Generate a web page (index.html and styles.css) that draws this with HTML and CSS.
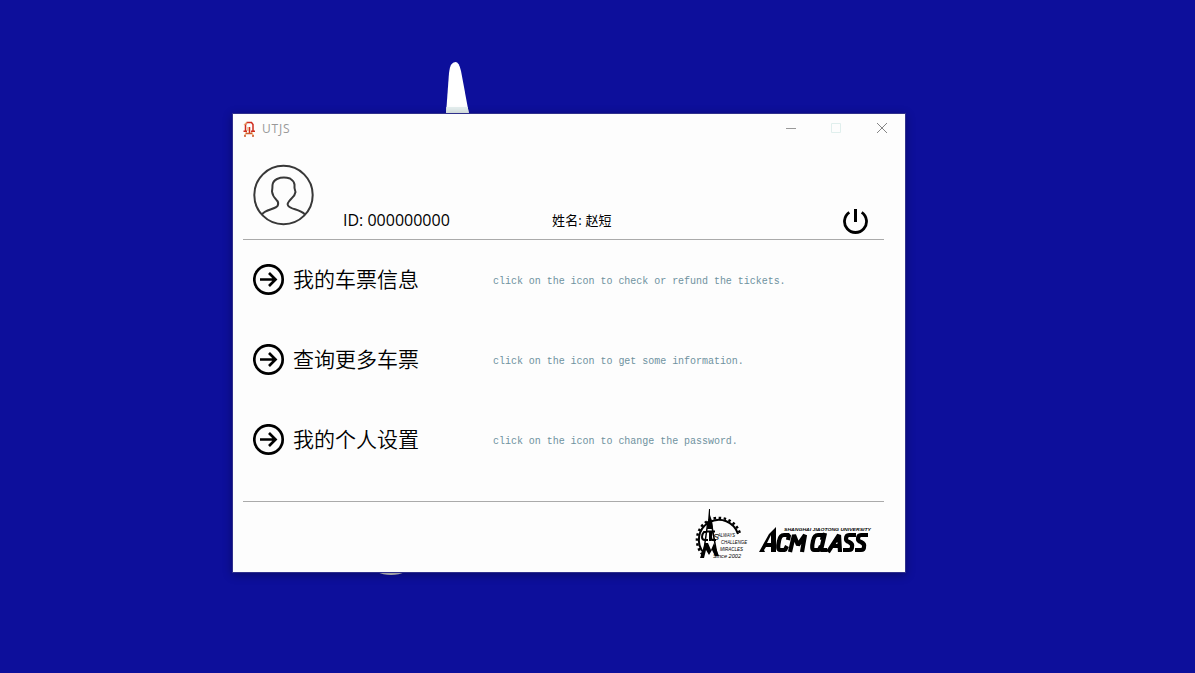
FILE: index.html
```
<!DOCTYPE html>
<html lang="zh-CN">
<head>
<meta charset="utf-8">
<title>UTJS</title>
<link rel="stylesheet" href="styles.css">
</head>
<body>
<svg class="symbols" aria-hidden="true">
  <symbol id="arrow" viewBox="0 0 32 32">
    <circle cx="15.500" cy="15.500" r="14.200" fill="none" stroke="#000" stroke-width="2.700"/>
    <path d="M7 15.500H23M16 9l6.500 6.500l-6.500 6.500" fill="none" stroke="#000" stroke-width="2.700"/>
  </symbol>
</svg>
<main class="desktop">
  <svg class="wallpaper-tower" viewBox="0 0 24 52"><path d="M1 52L4 11Q5 0 10.500 0Q14 0 16 9L24 52Z" fill="#fff"/><path d="M1.300 45H22.700L24 52H1Z" fill="#e6f0f0"/></svg>
  <svg class="wallpaper-base" viewBox="0 0 28 4"><path d="M0 0H28Q22 3 14 3Q6 3 0 0Z" fill="#c9c9c9"/></svg>
  <section class="window">
    <header class="titlebar">
      <svg class="app-icon" viewBox="0 0 12 16"><path d="M2.500 10V3.500L4 1.500H8.500L10 3.500V10M.5 10.200H4M8 10.200h4M6.500 6v6" fill="none" stroke="#cf2b1c" stroke-width="1.500"/><path d="M1 4L4 1.500M5 6v4M3.500 11L1.500 15M8.500 11l2 4" fill="none" stroke="#ecaa73" stroke-width="1.300"/><path d="M3 12.500h6M1 15h2M9 15h2" stroke="#cf5b2c" stroke-width="1.400"/></svg>
      <span class="title">UTJS</span>
      <div class="controls">
        <svg viewBox="0 0 11 11"><path d="M1 5.500h10" stroke="#999"/></svg>
        <svg viewBox="0 0 11 11"><path d="M.5.5h9v9h-9z" fill="none" stroke="#e0efed"/></svg>
        <svg viewBox="0 0 11 11"><path d="M0 0l10 10M10 0l-10 10" stroke="#858585"/></svg>
      </div>
    </header>
    <div class="profile">
      <svg class="avatar" viewBox="0 0 62 62"><g fill="none" stroke="#383838" stroke-width="2"><circle cx="31.500" cy="31" r="29.200"/><path d="M10 50.500C13 45 24 45.500 25.800 41.500Q27 38 24.500 36Q20.500 32 20 27.500Q20.500 24 20.500 21Q21 17 25 15Q31 12.500 38 14.500Q42 17 42.500 20.500Q42 24 43.500 28Q43 31.500 39.500 34.500Q34.500 39.500 36 41.500C39 46 47 44.500 53 50.500"/></g></svg>
      <span class="user-id">ID: 000000000</span>
      <span class="user-name">姓名: 赵短</span>
      <svg class="power" viewBox="0 0 26 26"><path d="M6.300 4.400A11 11 0 1 0 18.700 4.400" fill="none" stroke="#000" stroke-width="2.800"/><path d="M12.500 1v13" stroke="#000" stroke-width="3"/></svg>
    </div>
    <div class="menu">
      <div class="entry"><svg class="go"><use href="#arrow"/></svg><span class="label">我的车票信息</span><span class="hint">click on the icon to check or refund the tickets.</span></div>
      <div class="entry"><svg class="go"><use href="#arrow"/></svg><span class="label">查询更多车票</span><span class="hint">click on the icon to get some information.</span></div>
      <div class="entry"><svg class="go"><use href="#arrow"/></svg><span class="label">我的个人设置</span><span class="hint">click on the icon to change the password.</span></div>
    </div>
    <footer class="brand">
      <svg class="emblem" viewBox="0 0 54 54">
        <path d="M8 44.200A20 20 0 1 1 42 25" fill="none" stroke="#000" stroke-width="2"/>
        <path d="M6.500 45.500A22 22 0 1 1 44 24.500" fill="none" stroke="#000" stroke-width="2.500" stroke-dasharray="2.500 2.500"/>
        <path d="M13 0h1v6l2 6 1 8h-6l1-8z"/>
        <path d="M12 12L7 48M15 12l6 34" stroke="#000" stroke-width="1.500"/>
        <path d="M4 49l5-15h3l3 7 3-7 5 13h-4l-3-6-3 5-3-5-2 8z"/>
        <path d="M11 23H8q-2 2-2 5t3 3h3M14 22v10M11 22.500h8M20 31h-4q-2-3 0-8" fill="none" stroke="#000" stroke-width="2"/>
        <g class="emblem-text"><text x="17" y="31" font-size="9">S</text><text x="22" y="28" textLength="17" lengthAdjust="spacingAndGlyphs">ALWAYS</text><text x="25" y="35" textLength="26" lengthAdjust="spacingAndGlyphs">CHALLENGE</text><text x="24" y="41.500" textLength="23" lengthAdjust="spacingAndGlyphs">MIRACLES</text><text x="17" y="48.500" textLength="28" lengthAdjust="spacingAndGlyphs">Since 2002</text></g>
      </svg>
      <svg class="wordmark" viewBox="0 0 114 30">
        <text class="university" x="25" y="6" textLength="87" lengthAdjust="spacingAndGlyphs">SHANGHAI JIAOTONG UNIVERSITY</text>
        <path d="M0 27L10 9l7-7v25h-5v-5H7l-2 3 1 2zM8 18h4v-8z" fill-rule="evenodd"/>
        <g fill="none" stroke="#000" stroke-width="4.200" stroke-linejoin="bevel"><path d="M29 15l1-5h-5q-4 0-5 6-2 9 1 9h5l2-4"/><path d="M31 27l4-17 4 10 7-10-3 17"/><path d="M63 15l1-5h-5q-4 0-5 6-2 9 1 9h5l2-4M66 8l-4 17h6M69 27l11-17 1 17M74 21h7"/><path d="M97 10h-7q-3 0-3 4 0 2 3 3 4 2 3 5 0 3-3 3h-6M109 10h-7q-3 0-3 4 0 2 3 3 4 2 3 5 0 3-3 3h-6"/></g>
      </svg>
    </footer>
  </section>
</main>
</body>
</html>
```
FILE: styles.css
```
* { box-sizing: border-box; }

body {
  margin: 0;
  font-family: "Noto Sans", "Noto Sans CJK SC", sans-serif;
}

.symbols {
  position: absolute;
  width: 0;
  height: 0;
}

.desktop {
  position: relative;
  width: 1195px;
  height: 673px;
  overflow: hidden;
  background: #0d0f9b;
}

.wallpaper-tower {
  position: absolute;
  left: 445px;
  top: 62px;
  width: 24px;
  height: 52px;
}

.wallpaper-base {
  position: absolute;
  left: 377px;
  top: 572px;
  width: 28px;
  height: 4px;
}

.window {
  position: absolute;
  left: 233px;
  top: 114px;
  width: 672px;
  height: 458px;
  display: flex;
  flex-direction: column;
  background: #fdfdfd;
  box-shadow: 0 0 0 1px #30308c, 0 2px 9px 1px rgba(0, 0, 0, .3);
}

.titlebar {
  display: flex;
  align-items: center;
  height: 29px;
  padding: 0 17px 0 10px;
}

.app-icon {
  width: 12px;
  height: 16px;
}

.title {
  margin-left: 7px;
  font: 12px "Open Sans", sans-serif;
  letter-spacing: .8px;
  color: #999;
}

.controls {
  display: flex;
  gap: 35px;
  margin-left: auto;
}

.controls svg {
  width: 11px;
  height: 11px;
}

.profile {
  display: flex;
  align-items: flex-end;
  width: 641px;
  height: 97px;
  margin-left: 10px;
  padding: 0 15px 5px 9px;
  border-bottom: 1px solid #aaa;
  color: #000;
}

.avatar {
  width: 62px;
  height: 62px;
  margin-bottom: 8px;
}

.user-id {
  width: 209px;
  margin-left: 29px;
  padding-bottom: 2px;
  font: 16px/24px "Open Sans", sans-serif;
}

.user-name {
  font: 13px/20px "Noto Sans", "Noto Sans CJK SC", sans-serif;
  letter-spacing: .15px;
  padding-bottom: 4px;
}

.power {
  width: 26px;
  height: 26px;
  margin-left: auto;
}

.menu {
  height: 261px;
  padding: 0 20px;
}

.entry {
  display: flex;
  align-items: center;
  height: 80px;
}

.go {
  width: 32px;
  height: 32px;
}

.label {
  width: 200px;
  margin-left: 8px;
  padding-bottom: 4px;
  font: 350 21px/30px "Noto Sans CJK SC DemiLight", "Noto Sans CJK SC", sans-serif;
  color: #000;
}

.hint {
  padding-top: 3px;
  font: 10px/14px "Liberation Mono", monospace;
  letter-spacing: -.03px;
  color: #6f929f;
  white-space: nowrap;
}

.brand {
  display: flex;
  gap: 9px;
  width: 641px;
  height: 71px;
  margin-left: 10px;
  padding: 6px 11px 0 0;
  justify-content: flex-end;
  border-top: 1px solid #aaa;
}

.emblem {
  width: 54px;
  height: 54px;
  margin-top: 1px;
  overflow: visible;
}

.wordmark {
  width: 114px;
  height: 30px;
  margin-top: 17px;
  overflow: visible;
}

.emblem-text {
  font: italic 5px "Liberation Sans", sans-serif;
}

.university {
  font: bold italic 4px "Liberation Sans", sans-serif;
}
```
